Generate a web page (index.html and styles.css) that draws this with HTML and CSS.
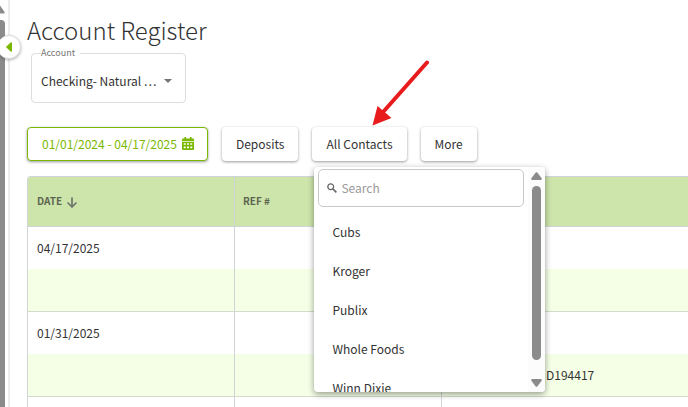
FILE: index.html
```html
<!DOCTYPE html>
<html lang="en">
<head>
    <meta charset="UTF-8">
    <meta name="viewport" content="width=device-width, initial-scale=1.0">
    <title>Account Register</title>
    <link rel="stylesheet" href="styles.css">
</head>
<body>
    <div class="app">
        <aside class="rail">
            <div class="rail-scroll">
                <svg class="rail-up" width="5" height="9" viewBox="0 0 5 9"><path d="M0 0.5 L4.6 7 Q5 8.5 3.8 8.5 H0 Z" fill="#8b8b8b"/></svg>
                <div class="rail-thumb"></div>
            </div>
            <button class="rail-toggle" type="button" aria-label="Collapse menu">
                <svg width="6" height="10" viewBox="0 0 6 10"><path d="M0.4 4.4 L4.6 0.4 Q6 -0.3 6 1.2 V8.8 Q6 10.3 4.6 9.6 L0.4 5.6 Q-0.2 5 0.4 4.4 Z" fill="#7ab800"/></svg>
            </button>
        </aside>

        <main class="content">
            <h1 class="title">Account Register</h1>

            <fieldset class="account">
                <legend><label for="account">Account</label></legend>
                <select id="account">
                    <option>Checking- Natural …</option>
                </select>
                <svg class="caret" width="8" height="4" viewBox="0 0 8 4"><path d="M0 0 H8 L4 4 Z" fill="#757575"/></svg>
            </fieldset>

            <div class="filters">
                <button class="btn btn-date" type="button">
                    01/01/2024 - 04/17/2025
                    <svg width="12" height="13" viewBox="0 0 12 13">
                        <path fill="#7ab800" fill-rule="evenodd" d="M2.4 0 H4.1 V1.5 H7.9 V0 H9.6 V1.5 H11 Q12 1.5 12 2.5 V4 H0 V2.5 Q0 1.5 1 1.5 H2.4 Z M0 4.8 H12 V12 Q12 13 11 13 H1 Q0 13 0 12 Z M1.7 6.2 V7.7 H3.7 V6.2 Z M5 6.2 V7.7 H7 V6.2 Z M8.3 6.2 V7.7 H10.3 V6.2 Z M1.7 9.4 V11.2 H3.7 V9.4 Z M5 9.4 V11.2 H7 V9.4 Z M8.3 9.4 V11.2 H10.3 V9.4 Z"/>
                    </svg>
                </button>
                <button class="btn" type="button">Deposits</button>

                <div class="dropdown">
                    <button class="btn" type="button" aria-expanded="true">All Contacts</button>
                    <svg class="pointer" width="58" height="66" viewBox="0 0 58 66">
                        <path d="M55 2.5 L12 51" stroke="#e81c1c" stroke-width="4" stroke-linecap="round"/>
                        <path d="M0.5 65.5 L5.5 46 L19.5 58 Z" fill="#e81c1c"/>
                    </svg>
                    <div class="menu">
                        <div class="menu-body">
                            <label class="search">
                                <svg width="10" height="10" viewBox="0 0 10 10" fill="none" stroke="#666" stroke-width="1.3"><circle cx="3.7" cy="3.7" r="2.9"/><path d="M5.9 5.9 L9.4 9.4" stroke-width="1.6"/></svg>
                                <input type="text" placeholder="Search" aria-label="Search">
                            </label>
                            <ul class="options">
                                <li><button type="button">Cubs</button></li>
                                <li><button type="button">Kroger</button></li>
                                <li><button type="button">Publix</button></li>
                                <li><button type="button">Whole Foods</button></li>
                                <li><button type="button">Winn Dixie</button></li>
                            </ul>
                        </div>
                        <div class="menu-scroll">
                            <svg width="11" height="8" viewBox="0 0 11 8"><path d="M4.7 0.6 Q5.5 -0.3 6.3 0.6 L10.6 6.2 Q11.2 8 9.8 8 H1.2 Q-0.2 8 0.4 6.2 Z" fill="#8b8b8b"/></svg>
                            <div class="menu-thumb"></div>
                            <svg width="11" height="8" viewBox="0 0 11 8"><path d="M4.7 7.4 Q5.5 8.3 6.3 7.4 L10.6 1.8 Q11.2 0 9.8 0 H1.2 Q-0.2 0 0.4 1.8 Z" fill="#8b8b8b"/></svg>
                        </div>
                    </div>
                </div>

                <button class="btn" type="button">More</button>
            </div>

            <table class="register">
                <thead>
                    <tr>
                        <th class="col-date">
                            Date
                            <svg width="10" height="11" viewBox="0 0 10 11" fill="none" stroke="#6c746c" stroke-width="1.7" stroke-linecap="round" stroke-linejoin="round"><path d="M5 1 V10 M1 6 L5 10 L9 6"/></svg>
                        </th>
                        <th class="col-ref">Ref #</th>
                        <th></th>
                    </tr>
                </thead>
                <tbody>
                    <tr><td>04/17/2025</td><td></td><td></td></tr>
                    <tr class="detail"><td></td><td></td><td></td></tr>
                    <tr><td>01/31/2025</td><td></td><td></td></tr>
                    <tr class="detail"><td></td><td></td><td class="memo">D194417</td></tr>
                    <tr><td></td><td></td><td></td></tr>
                </tbody>
            </table>
        </main>
    </div>
</body>
</html>
```

FILE: styles.css
```css
:root {
    --green: #7ab800;
    --header-green: #cde5ab;
    --row-green: #f4ffe6;
    --line: #cfd4d6;
    --text: #333;
    --thumb: #8b8b8b;
}

* { box-sizing: border-box; }

body {
    margin: 0;
    background: #fff;
    color: var(--text);
    font-family: "Noto Sans CJK SC", "Noto Sans", sans-serif;
    font-size: 12px;
    line-height: 20px;
}

button, input, select { font: inherit; color: inherit; }

.app {
    display: flex;
    height: 100vh;
    overflow: hidden;
}

/* Left rail */
.rail {
    position: relative;
    flex: none;
    width: 10px;
    border-right: 2px solid #ececec;
}

.rail-scroll {
    display: flex;
    flex-direction: column;
    gap: 6px;
    width: 5px;
    height: 100%;
    padding-top: 5px;
}

.rail-up { flex: none; }

.rail-thumb {
    flex: 1;
    background: var(--thumb);
    border-radius: 0 4px 0 0;
}

.rail-toggle {
    position: absolute;
    top: 35px;
    left: -3px;
    display: flex;
    align-items: center;
    justify-content: center;
    width: 24px;
    height: 24px;
    padding: 0;
    background: #fff;
    border: 1px solid #ddd;
    border-radius: 50%;
    box-shadow: 0 1px 3px rgba(0, 0, 0, 0.3);
}

/* Content */
.content {
    flex: 1;
    min-width: 0;
    padding: 13px 0 0 17px;
}

.title {
    margin: 0;
    font-size: 24px;
    font-weight: 300;
    line-height: 34px;
}

.account {
    display: flex;
    align-items: center;
    width: 155px;
    height: 56px;
    margin: 0 4px;
    padding: 0 13px 0 9px;
    border: 1px solid #ddd;
    border-radius: 4px;
}

.account legend {
    padding: 0 5px 0 0;
    font-size: 9px;
    line-height: 12px;
    color: #757575;
}

.account select {
    flex: 1;
    min-width: 0;
    padding: 0;
    appearance: none;
    background: none;
    border: none;
}

/* Filter buttons */
.filters {
    display: flex;
    align-items: center;
    gap: 14px;
    margin: 24px 0 15px;
}

.btn {
    display: flex;
    align-items: center;
    gap: 5px;
    height: 34px;
    padding: 0 14px 1px;
    background: #fff;
    border: none;
    border-radius: 4px;
    box-shadow: 0 1px 3px rgba(0, 0, 0, 0.4);
    white-space: nowrap;
}

.btn-date {
    padding-right: 13px;
    border: 1px solid var(--green);
    color: var(--green);
}

/* Contacts dropdown */
.dropdown { position: relative; }

.pointer {
    position: absolute;
    left: 60px;
    bottom: 35px;
}

.menu {
    position: absolute;
    z-index: 1;
    top: 40px;
    left: 2px;
    display: flex;
    width: 231px;
    height: 225px;
    background: #fff;
    border-radius: 4px;
    box-shadow: 0 2px 6px rgba(0, 0, 0, 0.4);
    overflow: hidden;
}

.menu-body {
    flex: 1;
    padding: 2px 4px;
}

.search {
    display: flex;
    align-items: center;
    gap: 4px;
    height: 38px;
    padding: 0 8px;
    border: 1px solid #c8c8c8;
    border-radius: 5px;
}

.search input {
    flex: 1;
    min-width: 0;
    padding: 0;
    background: none;
    border: none;
}

.search input::placeholder { color: #999; }

.options {
    margin: 5px 0 0;
    padding: 0;
    list-style: none;
}

.options button {
    display: block;
    width: 100%;
    height: 39px;
    padding: 0 14px;
    background: none;
    border: none;
    text-align: left;
}

.menu-scroll {
    display: flex;
    flex-direction: column;
    align-items: center;
    gap: 6px;
    width: 17px;
    padding: 5px 0;
    background: #fcfcfc;
}

.menu-thumb {
    width: 9px;
    height: 174px;
    margin-bottom: auto;
    background: var(--thumb);
    border-radius: 5px;
}

/* Register table */
.register {
    width: 100%;
    table-layout: fixed;
    border-collapse: separate;
    border-spacing: 0;
    border-top: 1px solid var(--line);
    border-left: 1px solid var(--line);
    border-top-left-radius: 4px;
}

.register th {
    height: 50px;
    padding: 0 8px 1px;
    background: var(--header-green);
    border-bottom: 1px solid var(--line);
    font-size: 10px;
    font-weight: 700;
    text-align: left;
    text-transform: uppercase;
    color: #5c6650;
}

.register th:first-child {
    padding-left: 9px;
    border-top-left-radius: 3px;
}

.register th svg {
    margin-left: 3px;
    vertical-align: middle;
}

.col-date, .col-ref { width: 207px; }

.register td {
    height: 42px;
    padding: 0 9px 1px;
}

.register th:not(:last-child),
.register td:not(:last-child) { border-right: 1px solid var(--line); }

.detail td {
    height: 43px;
    background: var(--row-green);
    border-bottom: 1px solid #d3dccb;
}

.register .memo { padding-left: 104px; }
```
